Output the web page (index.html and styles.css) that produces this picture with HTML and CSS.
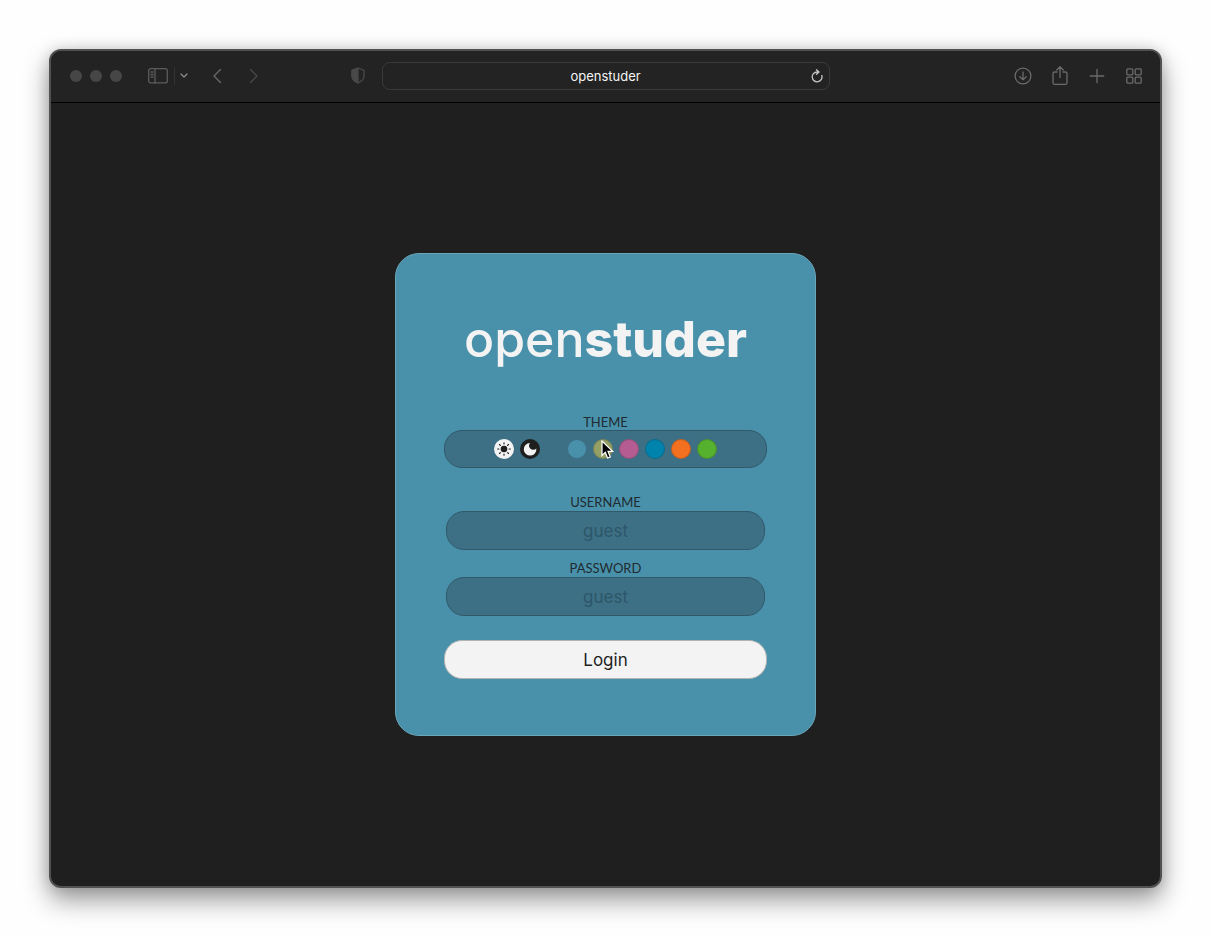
FILE: index.html
```html
<!DOCTYPE html>
<html lang="en">
<head>
<meta charset="utf-8">
<title>openstuder</title>
<link rel="stylesheet" href="styles.css">
</head>
<body>
<div class="window">
  <header class="toolbar">
    <div class="side">
      <div class="lights"><span class="light"></span><span class="light"></span><span class="light"></span></div>
      <button class="tool sidebar" aria-label="Sidebar"><svg width="20" height="16" viewBox="0 0 20 16"><rect x=".7" y=".7" width="18.6" height="14.2" rx="2"/><path d="M7 1v14M3 4h2M3 6.5h2M3 9h2"/></svg></button>
      <span class="divider"></span>
      <button class="tool more" aria-label="Tab groups"><svg width="8" height="6" viewBox="0 0 8 6"><path d="M1 1l3 3 3-3"/></svg></button>
      <button class="tool back" aria-label="Back"><svg width="10" height="16" viewBox="0 0 10 16"><path d="M8.500 1.500L2 8l6.500 6.500"/></svg></button>
      <button class="tool forward" aria-label="Forward"><svg width="10" height="16" viewBox="0 0 10 16"><path d="M1.500 1.500L8 8l-6.500 6.500"/></svg></button>
      <button class="tool shield" aria-label="Privacy report"><svg width="14" height="17" viewBox="0 0 14 17"><path d="M7 1l6 2.300v6c0 3-2.500 5-6 6.700-3.500-1.700-6-3.700-6-6.700v-6z"/><path class="solid" d="M7 1v15c-3.500-1.700-6-3.700-6-6.700v-6z"/></svg></button>
    </div>
    <div class="address">
      <input class="url" type="text" value="openstuder" aria-label="Address">
      <button class="tool reload" aria-label="Reload"><svg width="12" height="14" viewBox="0 0 12 14"><path d="M10.800 6.500A4.900 4.900 0 1 1 6 3h1.500M5.500.7L8 3 5.500 5.300"/></svg></button>
    </div>
    <div class="side actions">
      <button class="tool" aria-label="Downloads"><svg width="18" height="18" viewBox="0 0 18 18"><circle cx="9" cy="9" r="7.900"/><path d="M9 4.800v8M5.800 9.700L9 12.900l3.200-3.200"/></svg></button>
      <button class="tool" aria-label="Share"><svg width="18" height="20" viewBox="0 0 18 20"><path d="M6 6H3.500A1.500 1.500 0 0 0 2 7.500v9.300a1.500 1.500 0 0 0 1.500 1.500h11a1.500 1.500 0 0 0 1.500-1.500V7.500A1.500 1.500 0 0 0 14.500 6H12M9 11.500V1M5.800 4L9 .8 12.200 4"/></svg></button>
      <button class="tool" aria-label="New tab"><svg width="18" height="18" viewBox="0 0 18 18"><path d="M9 2.300v13.400M2.300 9h13.400"/></svg></button>
      <button class="tool" aria-label="Tab overview"><svg width="18" height="18" viewBox="0 0 18 18"><rect x="1.800" y="1.800" width="6" height="6" rx="1"/><rect x="10.200" y="1.800" width="6" height="6" rx="1"/><rect x="1.800" y="10.200" width="6" height="6" rx="1"/><rect x="10.200" y="10.200" width="6" height="6" rx="1"/></svg></button>
    </div>
  </header>
  <main class="page">
    <form class="card">
      <h1 class="logo">open<b class="logo-strong">studer</b></h1>
      <fieldset class="theme">
        <legend class="label">THEME</legend>
        <div class="picker">
          <div class="group">
            <button type="button" class="mode light-mode" aria-label="Light theme"><svg width="20" height="20" viewBox="0 0 20 20"><circle cx="10" cy="10" r="3.300" fill="currentColor"/><path d="M10 3.700v1.200M10 15.100v1.200M3.700 10h1.200M15.100 10h1.200M5.500 5.500l.9.9M13.600 13.600l.9.9M5.500 14.500l.9-.9M13.600 6.400l.9-.9" stroke="currentColor" stroke-width="1.100" stroke-linecap="round"/></svg></button>
            <button type="button" class="mode dark-mode" aria-label="Dark theme"><svg width="20" height="20" viewBox="0 0 20 20"><path d="M10 4A3.900 3.900 0 0 0 16.300 9.400 6.300 6.300 0 1 1 10 4z" fill="currentColor"/></svg></button>
          </div>
          <div class="group">
            <input class="swatch teal" type="radio" name="color" aria-label="Teal" checked>
            <span class="hovered"><input class="swatch olive" type="radio" name="color" aria-label="Olive"><svg class="cursor" width="14" height="20" viewBox="0 0 14 20"><path d="M1 1v14.500l3.300-3.100 2.300 5.600 2.700-1.100L7 11.400h4.700z" fill="#000" stroke="#fff" stroke-width="1.200"/></svg></span>
            <input class="swatch pink" type="radio" name="color" aria-label="Pink">
            <input class="swatch blue" type="radio" name="color" aria-label="Blue">
            <input class="swatch orange" type="radio" name="color" aria-label="Orange">
            <input class="swatch green" type="radio" name="color" aria-label="Green">
          </div>
        </div>
      </fieldset>
      <div class="field">
        <label class="label" for="username">USERNAME</label>
        <input class="entry" id="username" type="text" placeholder="guest">
      </div>
      <div class="field">
        <label class="label" for="password">PASSWORD</label>
        <input class="entry" id="password" type="password" placeholder="guest">
      </div>
      <button class="login" type="submit">Login</button>
    </form>
  </main>
</div>
</body>
</html>
```
FILE: styles.css
```css
* { box-sizing: border-box; }
body {
  margin: 0;
  min-height: 100vh;
  padding: 49px;
  display: flex;
  background: #fefefe;
  font-family: Inter, "Liberation Sans", sans-serif;
}
button, input { font: inherit; margin: 0; padding: 0; }
button { border: 0; background: none; }
.window {
  flex: 1;
  display: flex;
  flex-direction: column;
  border: 2px solid #505151;
  border-radius: 12px;
  overflow: hidden;
  background: #1f1f1f;
  box-shadow: 0 12px 26px rgba(0, 0, 0, .4), 0 0 14px rgba(0, 0, 0, .14);
}
.toolbar {
  display: grid;
  grid-template-columns: 1fr 448px 1fr;
  align-items: center;
  height: 52px;
  padding-bottom: 2px;
  background: #232323;
  border-bottom: 1px solid #000;
}
.side { display: flex; align-items: center; padding: 0 17px 0 19px; }
.lights { display: flex; gap: 8px; }
.light { width: 12px; height: 12px; border-radius: 50%; background: #464646; }
.tool { display: flex; color: #6a6b6a; }
.tool svg { fill: none; stroke: currentColor; stroke-width: 1.3; stroke-linecap: round; stroke-linejoin: round; }
.tool .solid { fill: currentColor; }
.sidebar { margin-left: 26px; color: #5b5c5b; }
.divider { width: 1px; height: 18px; margin: 0 5px 0 6px; background: #333; }
.more { color: #8b8b8b; }
.back { margin-left: 24px; }
.forward { margin-left: 27px; color: #484848; }
.shield { margin-left: auto; color: #484948; }
.address {
  display: flex;
  align-items: center;
  height: 28px;
  padding: 0 6px;
  border: 1px solid #3b3b3b;
  border-radius: 8px;
}
.url {
  flex: 1;
  min-width: 0;
  padding-left: 12px;
  border: 0;
  background: none;
  color: #f4f4f4;
  font-size: 13px;
  line-height: 16px;
  text-align: center;
}
.reload { color: #c4c4c4; }
.actions { justify-content: flex-end; gap: 19px; }
.page { flex: 1; display: flex; align-items: center; justify-content: center; }
.card {
  display: flex;
  flex-direction: column;
  width: 421px;
  max-width: 100%;
  padding: 53px 48px 56px;
  border: 1px solid #69a5bb;
  border-radius: 24px;
  background: #4991ab;
}
.logo {
  margin: 0 0 43px;
  color: #f3f3f3;
  font: 500 50px/64px Inter, sans-serif;
  text-align: center;
}
.logo-strong { font-weight: 800; }
.label {
  display: block;
  padding: 0;
  margin: 0 auto;
  color: #1f2b30;
  font: 13px/16px Lato, sans-serif;
  text-align: center;
}
.theme { min-width: 0; margin: 0 0 26px; padding: 0; border: 0; }
.picker {
  display: flex;
  align-items: center;
  justify-content: center;
  gap: 27px;
  height: 38px;
  border: 1px solid #31596a;
  border-radius: 18px;
  background: #3d7085;
}
.group { display: flex; gap: 6px; }
.mode { width: 20px; height: 20px; border-radius: 50%; }
.mode svg { display: block; }
.light-mode { background: #f3f3f3; color: #1f1f1f; }
.dark-mode { background: #1f1f1f; color: #f3f3f3; }
.swatch {
  display: block;
  appearance: none;
  width: 20px;
  height: 20px;
  border: 1px solid rgba(31, 31, 31, .2);
  border-radius: 50%;
}
.teal { background: #4991ab; border-color: #3d7085; }
.olive { background: #95a065; }
.pink { background: #b55d93; }
.blue { background: #0083ac; }
.orange { background: #f37021; }
.green { background: #56b12e; }
.hovered { position: relative; }
.cursor { position: absolute; left: 8px; top: 1px; }
.field { padding: 0 2px; margin-bottom: 10px; }
.entry {
  display: block;
  width: 100%;
  height: 39px;
  border: 1px solid #31596a;
  border-radius: 18px;
  background: #3d7085;
  color: #1f1f1f;
  font-size: 17px;
  text-align: center;
}
.field .label { padding-bottom: 1px; }
.entry::placeholder { color: #2d5769; opacity: 1; }
.login {
  height: 39px;
  margin-top: 14px;
  border: 1px solid #b3b3b3;
  border-radius: 18px;
  background: #f3f3f3;
  color: #1f1f1f;
  font-size: 17px;
}
```
